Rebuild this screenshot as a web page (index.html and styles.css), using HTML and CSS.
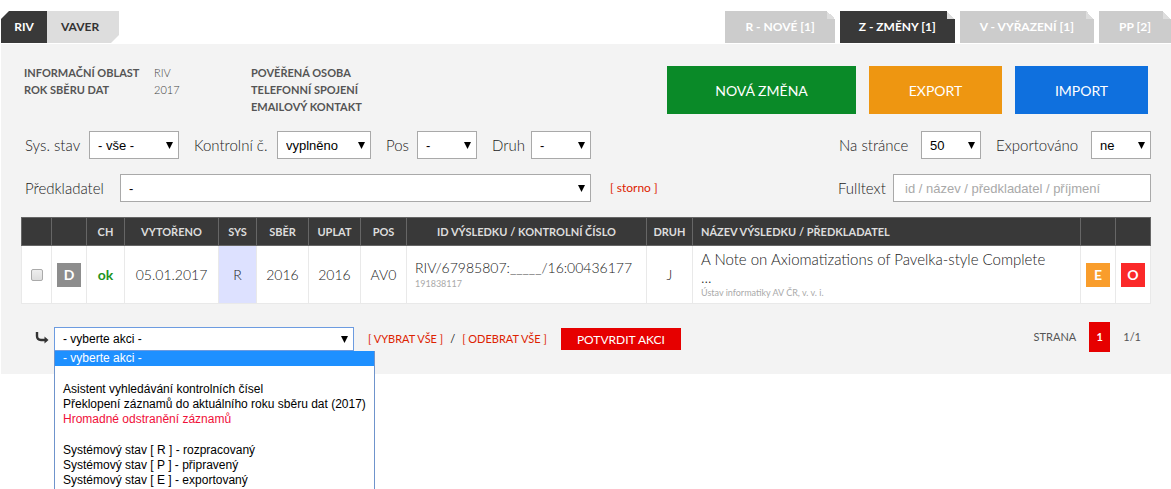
FILE: index.html
```html
<!DOCTYPE html>
<html lang="cs">
<head>
<meta charset="utf-8">
<title>RIV – Změny</title>
<link rel="stylesheet" href="styles.css">
</head>
<body>
<header class="tabs">
  <nav class="tabs-main">
    <a class="tab tab-riv" href="#">RIV</a>
    <a class="tab tab-vaver" href="#">VAVER</a>
  </nav>
  <nav class="tabs-state">
    <a class="state" href="#">R - NOVÉ [1]</a>
    <a class="state state-active" href="#">Z - ZMĚNY [1]</a>
    <a class="state" href="#">V - VYŘAZENÍ [1]</a>
    <a class="state" href="#">PP [2]</a>
  </nav>
</header>
<main class="panel">
  <section class="top">
    <dl class="info info-area">
      <dt>INFORMAČNÍ OBLAST</dt><dd>RIV</dd>
      <dt>ROK SBĚRU DAT</dt><dd>2017</dd>
    </dl>
    <dl class="info">
      <dt>POVĚŘENÁ OSOBA</dt><dd></dd>
      <dt>TELEFONNÍ SPOJENÍ</dt><dd></dd>
      <dt>EMAILOVÝ KONTAKT</dt><dd></dd>
    </dl>
    <div class="buttons">
      <button class="big big-new" type="button">NOVÁ ZMĚNA</button>
      <button class="big big-export" type="button">EXPORT</button>
      <button class="big big-import" type="button">IMPORT</button>
    </div>
  </section>
  <form class="filters">
    <div class="row">
      <div class="field"><label class="w-sys" for="sys">Sys. stav</label><span class="pick pick-90"><select id="sys"><option>- vše -</option></select></span></div>
      <div class="field"><label class="w-kontrolni" for="kc">Kontrolní č.</label><span class="pick pick-94"><select id="kc"><option>vyplněno</option></select></span></div>
      <div class="field"><label class="w-pos" for="pos">Pos</label><span class="pick pick-60"><select id="pos"><option>-</option></select></span></div>
      <div class="field"><label class="w-druh" for="druh">Druh</label><span class="pick pick-60"><select id="druh"><option>-</option></select></span></div>
      <div class="field push"><label class="w-strance" for="count">Na stránce</label><span class="pick pick-60"><select id="count"><option>50</option></select></span></div>
      <div class="field"><label class="w-export" for="exp">Exportováno</label><span class="pick pick-60"><select id="exp"><option>ne</option></select></span></div>
    </div>
    <div class="row">
      <div class="field"><label class="w-predkladatel" for="pred">Předkladatel</label><span class="pick pick-wide"><select id="pred"><option>-</option></select></span></div>
      <a class="storno" href="#">[ storno ]</a>
      <div class="field push"><label class="w-fulltext" for="full">Fulltext</label><input class="text" id="full" type="text" placeholder="id / název / předkladatel / příjmení"></div>
    </div>
  </form>
  <table class="results">
    <colgroup>
      <col class="c30"><col class="c35"><col class="c38"><col class="c94"><col class="c38"><col class="c52"><col class="c52"><col class="c46"><col class="c240"><col class="c46"><col><col class="c35"><col class="c35">
    </colgroup>
    <thead>
      <tr><th></th><th></th><th>CH</th><th>VYTOŘENO</th><th>SYS</th><th>SBĚR</th><th>UPLAT</th><th>POS</th><th>ID VÝSLEDKU / KONTROLNÍ ČÍSLO</th><th>DRUH</th><th class="left">NÁZEV VÝSLEDKU / PŘEDKLADATEL</th><th></th><th></th></tr>
    </thead>
    <tbody>
      <tr>
        <td><input class="check" type="checkbox" aria-label="Vybrat záznam"></td>
        <td><button class="badge badge-d" type="button">D</button></td>
        <td class="ok">ok</td>
        <td>05.01.2017</td>
        <td class="sys">R</td>
        <td>2016</td>
        <td>2016</td>
        <td>AV0</td>
        <td class="left">RIV/67985807:_____/16:00436177<small>191838117</small></td>
        <td>J</td>
        <td class="left title">A Note on Axiomatizations of Pavelka-style Complete ...<small>Ústav informatiky AV ČR, v. v. i.</small></td>
        <td><button class="badge badge-e" type="button">E</button></td>
        <td><button class="badge badge-o" type="button">O</button></td>
      </tr>
    </tbody>
  </table>
  <footer class="actions">
    <div class="bulk">
      <svg class="turn" viewBox="0 0 14 14" width="14" height="14" aria-hidden="true"><path d="M2 0V4Q2 8 6 8H12" fill="none" stroke="#333" stroke-width="2.400"/><path d="M9.500 4.500L13.500 8L9.500 11.500Z" fill="#333"/></svg>
      <div class="action-box">
        <span class="pick pick-action"><select id="action" aria-label="Akce"><option>- vyberte akci -</option></select></span>
        <ul class="menu" role="listbox" aria-label="Akce">
          <li class="current" role="option" aria-selected="true">- vyberte akci -</li>
          <li class="blank" role="presentation"></li>
          <li role="option">Asistent vyhledávání kontrolních čísel</li>
          <li role="option">Překlopení záznamů do aktuálního roku sběru dat (2017)</li>
          <li class="danger" role="option">Hromadné odstranění záznamů</li>
          <li class="blank" role="presentation"></li>
          <li role="option">Systémový stav [ R ] - rozpracovaný</li>
          <li role="option">Systémový stav [ P ] - připravený</li>
          <li role="option">Systémový stav [ E ] - exportovaný</li>
        </ul>
      </div>
      <div class="links"><a href="#">[ VYBRAT VŠE ]</a><span>/</span><a href="#">[ ODEBRAT VŠE ]</a></div>
      <button class="confirm" type="button">POTVRDIT AKCI</button>
    </div>
    <nav class="pager"><span>STRANA</span><a class="page" href="#">1</a><span>1/1</span></nav>
  </footer>
</main>
</body>
</html>
```
FILE: styles.css
```css
* { box-sizing: border-box; }
body {
  margin: 0;
  min-height: 100vh;
  padding: 11px 0 0 1px;
  background: #fff;
  color: #222;
  font: 300 14px/18px Lato, "Open Sans", sans-serif;
}
a { text-decoration: none; }
button { border: 0; padding: 0; color: #fff; font-family: inherit; cursor: pointer; }
.tabs { display: flex; justify-content: space-between; height: 32px; margin-bottom: 1px; font-weight: 700; line-height: 32px; }
.tabs-main { display: flex; }
.tab { text-align: center; font-size: 12px; }
.tab-riv { width: 46px; background: #393939; color: #fff; clip-path: polygon(8px 0, 100% 0, 100% 100%, 0 100%, 0 8px); }
.tab-vaver { width: 72px; padding-right: 6px; background: #ddd; color: #333; clip-path: polygon(0 0, 100% 0, 100% 24px, 64px 100%, 0 100%); }
.tabs-state { display: flex; gap: 5px; }
.state {
  padding: 0 20px;
  font-size: 12px;
  color: #fff;
  background: linear-gradient(45deg, #ddd 50%, #fff 50%) top right / 8px 8px no-repeat, #ccc;
}
.state-active { padding: 0 19px; background-color: #393939; }
.panel { padding: 21px 20px; background: #f3f3f3; min-height: 330px; }
.top { display: flex; min-height: 66px; padding: 1px 3px 0; }
.info { display: grid; grid-template-columns: 130px 97px; grid-auto-rows: 17px; margin: 0; font-size: 11px; line-height: 14px; color: #444; }
.info dt { font-weight: 700; white-space: nowrap; color: #555; }
.info dd { margin: 0; }
.buttons { display: flex; gap: 13px; margin-left: auto; }
.big { width: 133px; height: 48px; font-size: 14px; }
.big-new { width: 189px; background: #0a8a28; }
.big-export { background: #ee9611; }
.big-import { background: #0f70de; }
.row { display: flex; align-items: center; gap: 15px; margin-bottom: 15px; padding-left: 4px; }
.field { display: flex; align-items: center; }
.field label { font-size: 15px; white-space: nowrap; }
.push { margin-left: auto; }
.w-sys { width: 64px; }
.w-kontrolni { width: 83px; }
.w-pos { width: 31px; }
.w-druh { width: 39px; }
.w-strance { width: 82px; }
.w-export { width: 95px; }
.w-predkladatel { width: 95px; }
.w-fulltext { width: 55px; }
.pick { position: relative; display: block; }
.pick::after {
  content: "";
  position: absolute;
  right: 6px;
  top: 50%;
  width: 7px;
  height: 7px;
  margin-top: -3px;
  background: #000;
  clip-path: polygon(0 0, 100% 0, 50% 100%);
  pointer-events: none;
}
.pick select {
  display: block;
  appearance: none;
  width: 100%;
  height: 28px;
  padding: 0 8px;
  border: 1px solid #a9a9a9;
  border-radius: 0;
  background: #fff;
  color: #000;
  font: 13px "Liberation Sans", sans-serif;
}
.pick-60 { width: 60px; }
.pick-90 { width: 90px; }
.pick-94 { width: 94px; }
.pick-wide { width: 471px; }
.storno { margin-left: 4px; font-size: 12px; font-weight: 400; color: #d20; }
.text { width: 258px; height: 28px; padding: 0 11px; border: 1px solid #a9a9a9; font: 13px "Liberation Sans", sans-serif; }
.text::placeholder { color: #a9a9a9; }
.results { width: 100%; table-layout: fixed; border-collapse: collapse; background: #fff; }
.c30 { width: 30px; }
.c35 { width: 35px; }
.c38 { width: 38px; }
.c46 { width: 46px; }
.c52 { width: 52px; }
.c94 { width: 94px; }
.c240 { width: 240px; }
.results th { height: 28px; padding: 0; border: 1px solid #666; background: #393939; color: #ddd; font-size: 11px; line-height: 14px; white-space: nowrap; }
.results td { height: 58px; padding: 0; border: 1px solid #e9e9e9; text-align: center; }
.results .left { padding: 0 8px; text-align: left; }
.results small { display: block; font-size: 9px; font-weight: 400; line-height: 14px; color: #aaa; }
.results .title { padding-right: 28px; font-size: 15px; }
.results .ok { color: #219421; font-weight: 700; }
.results .sys { background: #dde1ff; }
.check { display: block; appearance: none; width: 12px; height: 12px; margin: 0 auto; border: 1px solid #aaa; border-radius: 2px; background: linear-gradient(#eee, #ddd); }
.badge { display: block; width: 24px; height: 24px; margin: 0 auto; font-size: 14px; font-weight: 700; }
.badge-d { background: #8d8d8d; }
.badge-e { background: #f99d2c; }
.badge-o { background: #fb2929; }
.actions { display: flex; justify-content: space-between; margin-top: 18px; padding: 0 10px 0 14px; font-size: 11px; font-weight: 400; }
.bulk { display: flex; align-items: center; padding-top: 4px; }
.turn { margin-right: 5px; }
.action-box { position: relative; }
.pick-action { width: 300px; }
.pick-action select { height: 24px; border-color: #6c9be0; font-size: 12px; }
.menu {
  position: absolute;
  z-index: 1;
  top: 100%;
  left: 0;
  width: 321px;
  margin: 0;
  padding: 0 0 1px;
  border: 1px solid #6f94cc;
  border-width: 0 1px;
  background: #fff;
  color: #000;
  list-style: none;
  font: 12px/15px "Liberation Sans", sans-serif;
}
.menu li { height: 15px; padding-left: 8px; white-space: nowrap; }
.menu .blank { height: 16px; }
.menu .current { background: #1e90ff; color: #fff; }
.menu .danger { color: #f0103a; }
.links { display: flex; gap: 7px; margin: 0 14px; white-space: nowrap; }
.links a { color: #d20; }
.confirm { width: 120px; height: 22px; background: #e60000; font-size: 12px; }
.pager { display: flex; align-items: center; gap: 13px; color: #555; }
.page { width: 21px; background: #e60000; color: #fff; font-weight: 700; line-height: 30px; text-align: center; }
```
